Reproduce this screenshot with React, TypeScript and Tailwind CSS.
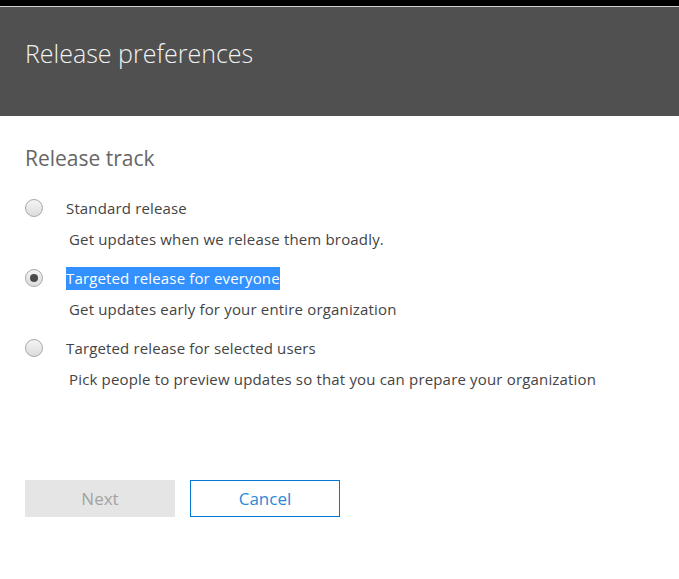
const options = [
  { label: "Standard release", desc: "Get updates when we release them broadly.", checked: false },
  { label: "Targeted release for everyone", desc: "Get updates early for your entire organization", checked: true },
  { label: "Targeted release for selected users", desc: "Pick people to preview updates so that you can prepare your organization", checked: false },
];

function Radio({ checked }: { checked: boolean }) {
  return (
    <span className="flex h-[18px] w-[18px] shrink-0 items-center justify-center rounded-full border border-[#a8a8a8] bg-gradient-to-b from-[#f4f4f4] to-[#dcdcdc]">
      {checked && <span className="h-[8px] w-[8px] rounded-full bg-[#4a4a4a]" />}
    </span>
  );
}

export default function App() {
  return (
    <div className="h-[579px] w-[679px] bg-white font-['Open_Sans',sans-serif]">
      <div className="h-[6px] bg-black" />
      <div className="h-px bg-[#cfcfcf]" />
      <header className="flex h-[109px] items-start bg-[#505050] px-[25px] pt-[28px]">
        <h1 className="text-[25px] font-light text-[#f2f2f2]">Release preferences</h1>
      </header>

      <main className="px-[25px] pt-[27px]">
        <h2 className="text-[21px] leading-[30px] text-[#666666]">Release track</h2>

        <div className="mt-[24px] flex flex-col">
          {options.map((o) => (
            <div key={o.label} className="mb-[17px]">
              <div className="flex h-[22px] items-center">
                <Radio checked={o.checked} />
                <span
                  className={
                    "ml-[23px] text-[15px] leading-[23px] tracking-[0.15px] " +
                    (o.checked ? "bg-[#3390ff] text-white" : "text-[#444444]")
                  }
                >
                  {o.label}
                </span>
              </div>
              <p className="ml-[44px] mt-[9px] text-[15px] leading-[22px] tracking-[0.17px] text-[#444444]">{o.desc}</p>
            </div>
          ))}
        </div>

        <div className="mt-[73px] flex gap-[15px]">
          <button className="h-[37px] w-[150px] bg-[#e5e5e5] text-[17px] text-[#a3a3a3]">Next</button>
          <button className="h-[37px] w-[150px] border border-[#0078d7] bg-white text-[17px] text-[#2b88d8]">Cancel</button>
        </div>
      </main>
    </div>
  );
}
